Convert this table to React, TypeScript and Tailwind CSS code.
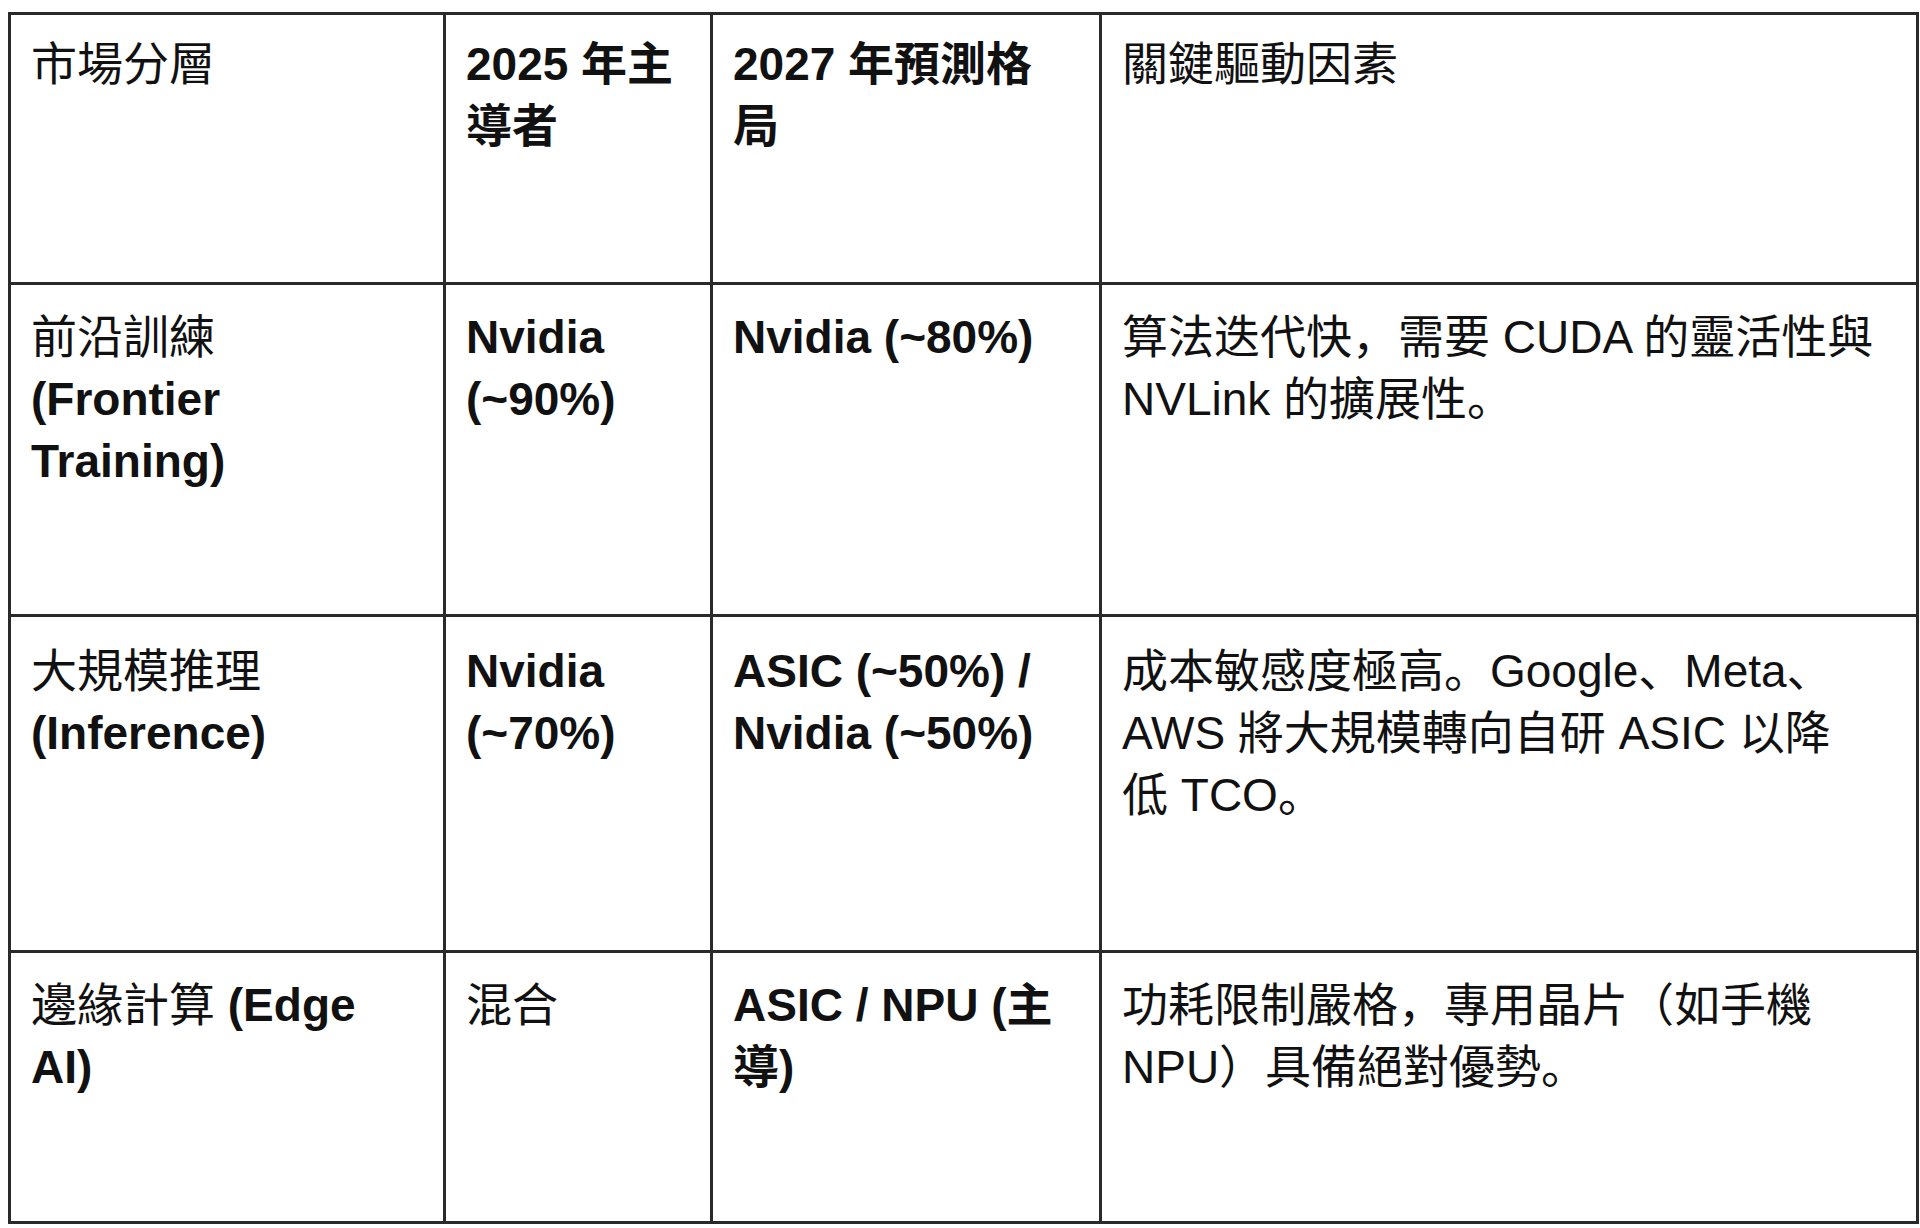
import type { ReactNode } from "react";

const font = "font-['Liberation_Sans','Noto_Sans_CJK_SC',sans-serif]";

function Cell({ children, top }: { children: ReactNode; top: string }) {
  return (
    <div className={`bg-white px-[20px] ${top} text-[46px] leading-[62px] text-[#111] whitespace-nowrap`}>
      {children}
    </div>
  );
}

export default function App() {
  return (
    <div className={`min-h-screen bg-white pl-[8px] pt-[12px] ${font}`}>
      {/* Market table */}
      <div className="inline-grid grid-cols-[432px_264px_386px_814px] grid-rows-[267px_329px_333px_268px] gap-[3px] p-[3px] bg-[#2a2a2a]">
        {/* header */}
        <Cell top="pt-[18px]">市場分層</Cell>
        <Cell top="pt-[18px]">
          <b>2025 年主<br />導者</b>
        </Cell>
        <Cell top="pt-[18px]">
          <b>2027 年預測格<br />局</b>
        </Cell>
        <Cell top="pt-[18px]">關鍵驅動因素</Cell>

        {/* frontier training */}
        <Cell top="pt-[21px]">
          前沿訓練<br />
          <b>(Frontier<br />Training)</b>
        </Cell>
        <Cell top="pt-[21px]">
          <b>Nvidia<br />(~90%)</b>
        </Cell>
        <Cell top="pt-[21px]">
          <b>Nvidia (~80%)</b>
        </Cell>
        <Cell top="pt-[21px]">
          算法迭代快，需要 CUDA 的靈活性與<br />
          NVLink 的擴展性。
        </Cell>

        {/* inference */}
        <Cell top="pt-[23px]">
          大規模推理<br />
          <b>(Inference)</b>
        </Cell>
        <Cell top="pt-[23px]">
          <b>Nvidia<br />(~70%)</b>
        </Cell>
        <Cell top="pt-[23px]">
          <b>ASIC (~50%) /<br />Nvidia (~50%)</b>
        </Cell>
        <Cell top="pt-[23px]">
          成本敏感度極高。Google、Meta、<br />
          AWS 將大規模轉向自研 ASIC 以降<br />
          低 TCO。
        </Cell>

        {/* edge */}
        <Cell top="pt-[21px]">
          邊緣計算 <b>(Edge<br />AI)</b>
        </Cell>
        <Cell top="pt-[21px]">混合</Cell>
        <Cell top="pt-[21px]">
          <b>ASIC / NPU (主<br />導)</b>
        </Cell>
        <Cell top="pt-[21px]">
          功耗限制嚴格，專用晶片（如手機<br />
          NPU）具備絕對優勢。
        </Cell>
      </div>
    </div>
  );
}
